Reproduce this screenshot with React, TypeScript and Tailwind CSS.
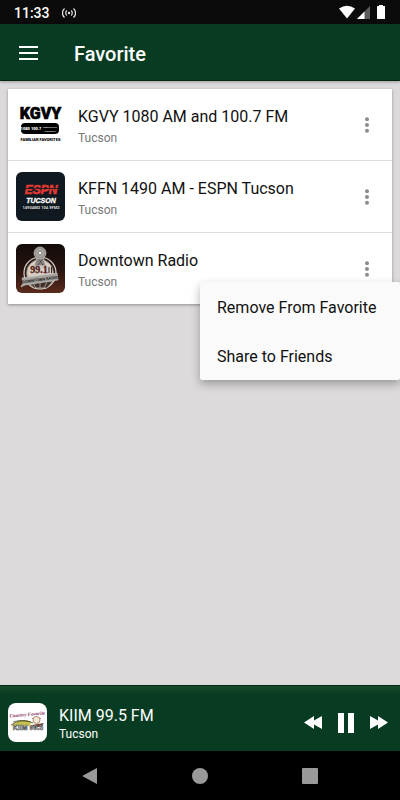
import { useState } from "react";

interface Station {
  id: string;
  name: string;
  city: string;
  logo: React.ReactNode;
}

const KgvyLogo = () => (
  <svg viewBox="0 0 49 49" className="size-full bg-white" aria-hidden="true">
    <g fontFamily="Roboto, sans-serif" fontWeight="900" textAnchor="middle">
      <text x="24.5" y="19" fontSize="16" stroke="#000" strokeWidth="0.6">
        KGVY
      </text>
      <rect x="5" y="23" width="38" height="11" rx="4" />
      <text x="15" y="30" fontSize="4" fill="#fff">
        1080 100.7
      </text>
      <text x="34" y="28" fontSize="2" fill="#ddd">
        GREEN VALLEY
      </text>
      <text x="34" y="32" fontSize="2" fill="#ddd">
        SAHUARITA
      </text>
      <text x="24.5" y="41" fontSize="4">
        FAMILIAR FAVORITES
      </text>
    </g>
  </svg>
);

const EspnLogo = () => (
  <svg viewBox="0 0 49 49" className="size-full bg-[#101820]" aria-hidden="true">
    <g fontFamily="'Liberation Sans', sans-serif" fontWeight="700" textAnchor="middle">
      <text
        x="25"
        y="22"
        fontSize="12"
        fontStyle="italic"
        fill="#e03a34"
        stroke="#e03a34"
        strokeWidth="0.6"
      >
        ESPN
      </text>
      <path d="M8 16.500h34" stroke="#101820" strokeWidth="0.8" />
      <text x="25" y="31" fontSize="7" fontStyle="italic" fill="#fff" stroke="#fff" strokeWidth="0.3">
        TUCSON
      </text>
      <text x="25" y="37" fontSize="4" fontFamily="Roboto, sans-serif" fill="#ddd">
        1490AM2 104.9FM2
      </text>
    </g>
  </svg>
);

const DowntownLogo = () => (
  <svg viewBox="0 0 49 49" className="size-full" aria-hidden="true">
    <defs>
      <linearGradient id="dusk" x1="0" y1="0" x2="0" y2="1">
        <stop offset="0" stopColor="#120b0a" />
        <stop offset="0.5" stopColor="#25130f" />
        <stop offset="1" stopColor="#5a2b1c" />
      </linearGradient>
    </defs>
    <rect width="49" height="49" fill="url(#dusk)" />
    <circle cx="24" cy="29" r="16" fill="#2b1d19" stroke="#d8d2c8" strokeWidth="1.2" />
    <circle cx="24" cy="29" r="13.5" fill="#d6cec2" stroke="#776e66" strokeWidth="0.8" />
    <path d="M21 13l-3 9h12l-3-9z" fill="#8c8883" stroke="#d8d4ce" strokeWidth="0.7" />
    <path d="M22 14l5 7M27 14l-5 7" stroke="#3c3735" strokeWidth="0.7" />
    <circle cx="24" cy="9" r="6" fill="#96928e" stroke="#c9c5c0" strokeWidth="0.7" />
    <circle cx="24" cy="9" r="3.5" fill="none" stroke="#c9c5c0" strokeWidth="0.6" />
    <circle cx="24" cy="9" r="1.3" fill="#eee" />
    <path d="M12 37l6 7h13l6-7z" fill="#40312c" stroke="#c9c1b7" strokeWidth="0.7" />
    <path d="M17 39l3 5M24 38v6M31 38l-3 6" stroke="#c9c1b7" strokeWidth="0.7" />
    <text
      x="23"
      y="29"
      fontSize="10"
      fontWeight="700"
      textAnchor="middle"
      fontFamily="'Liberation Serif', serif"
      fill="#541c1c"
      stroke="#541c1c"
      strokeWidth="0.3"
    >
      99.1
    </text>
    <path d="M33 23v6M35.500 23v6" stroke="#38211d" strokeWidth="1" />
    <path d="M6 34l35-5 1 7-33 5-4 2 2-4z" fill="#a5a29e" stroke="#cfcac4" strokeWidth="0.6" />
    <text
      x="24"
      y="37"
      fontSize="4"
      fontWeight="700"
      textAnchor="middle"
      fontFamily="Roboto, sans-serif"
      fill="#211d1c"
      transform="rotate(-8 24 36)"
    >
      DOWNTOWN RADIO
    </text>
  </svg>
);

const KiimLogo = () => (
  <svg viewBox="0 0 39 39" className="size-full bg-white" aria-hidden="true">
    <path d="M3 23c5-6 15-7 21-4l-3 4H3z" fill="#c9c14e" />
    <path d="M3 22c7-5 16-5 22-2M5 19c6-2 12-2 17 0" fill="none" stroke="#4e5033" strokeWidth="0.8" />
    <path d="M24 22l12-2-3 4h-8z" fill="#713d32" />
    <circle cx="28.500" cy="17" r="3.500" fill="#f5ead8" stroke="#a97a5d" strokeWidth="0.9" />
    <path d="M24 15l1 1M33 15l-1 1" stroke="#a97a5d" strokeWidth="0.8" />
    <text
      x="19.5"
      y="13"
      fontSize="5"
      fontStyle="italic"
      fontWeight="700"
      textAnchor="middle"
      fontFamily="'Liberation Serif', serif"
      fill="#842f60"
      transform="rotate(-5 20 13)"
    >
      Country Favorite
    </text>
    <text
      x="20"
      y="27"
      fontSize="7"
      fontWeight="700"
      textAnchor="middle"
      fontFamily="'Liberation Sans', sans-serif"
      fill="#fff"
      stroke="#555"
      strokeWidth="0.6"
    >
      KIIM 99.5
    </text>
  </svg>
);

const stations: Station[] = [
  { id: "kgvy", name: "KGVY 1080 AM and 100.7 FM", city: "Tucson", logo: <KgvyLogo /> },
  { id: "kffn", name: "KFFN 1490 AM - ESPN Tucson", city: "Tucson", logo: <EspnLogo /> },
  { id: "downtown", name: "Downtown Radio", city: "Tucson", logo: <DowntownLogo /> },
];

const menuItems = ["Remove From Favorite", "Share to Friends"];

const StatusBar = () => (
  <div className="flex h-6 items-center justify-between bg-[#0b0b0b] px-[14px] text-white">
    <div className="flex items-center gap-3 pt-0.5">
      <span className="text-sm font-medium">11:33</span>
      <svg width="14" height="12" viewBox="0 0 14 12" fill="none" stroke="#e5e5e5" aria-hidden="true">
        <circle cx="7" cy="6" r="1.2" fill="#e5e5e5" stroke="none" />
        <path
          d="M4.800 3.500a3.500 3.500 0 0 0 0 5M9.200 3.500a3.500 3.500 0 0 1 0 5M2.500 1.500a6 6 0 0 0 0 9M11.500 1.500a6 6 0 0 1 0 9"
          strokeWidth="1.2"
        />
      </svg>
    </div>
    <svg width="48" height="14" viewBox="0 0 48 14" aria-hidden="true">
      <path d="M1 3.500Q9 -2 17 3.500L9 13.500z" fill="#fff" />
      <path d="M32 1v13H19z" fill="#5c5c5c" />
      <path d="M26.500 6.500V14H19z" fill="#fff" />
      <path d="M41 0h4v1h1.500q.5 0 .5.500v12q0 .5-.5.500h-7q-.5 0-.5-.5v-12q0-.5.5-.5H41z" fill="#fff" />
    </svg>
  </div>
);

const App = () => {
  const [openMenu, setOpenMenu] = useState<string | null>("downtown");
  const [isPlaying, setIsPlaying] = useState(true);

  return (
    <div className="flex min-h-screen flex-col overflow-x-hidden bg-[#dddadc] font-[Roboto,sans-serif]">
      <StatusBar />

      <header className="flex h-[57px] items-center border-b border-[#03260f] bg-[#083c22] px-[19px] text-white shadow-[0_1px_3px_rgba(0,0,0,0.3)]">
        <button type="button" aria-label="Open navigation" className="cursor-pointer pt-0.5">
          <svg width="19" height="14" viewBox="0 0 19 14" fill="#fff">
            <path d="M0 0h19v2H0zM0 6h19v2H0zM0 12h19v2H0z" />
          </svg>
        </button>
        <h1 className="ml-9 pt-1 text-xl font-medium">Favorite</h1>
      </header>

      <main className="flex-1 px-2 pt-2">
        <ul className="bg-white shadow-[0_1px_3px_rgba(0,0,0,0.35)]">
          {stations.map((station) => (
            <li
              key={station.id}
              className="relative flex h-[72px] items-center border-b border-[#dedede] pr-4 pl-2 last:h-[71px] last:border-b-0"
            >
              <div className="size-[49px] shrink-0 overflow-hidden rounded-md">{station.logo}</div>
              <div className="ml-[13px] min-w-0 flex-1 pt-0.5">
                <h2 className="truncate text-base leading-6 text-[#111]">{station.name}</h2>
                <p className="text-xs leading-[18px] text-[#777]">{station.city}</p>
              </div>
              <button
                type="button"
                aria-label={`Options for ${station.name}`}
                onClick={() => setOpenMenu(openMenu === station.id ? null : station.id)}
                className="flex h-6 w-[18px] cursor-pointer items-center justify-center"
              >
                <svg width="4" height="16" viewBox="0 0 4 16" fill="#8c8c8c">
                  <circle cx="2" cy="2.300" r="2" />
                  <circle cx="2" cy="8" r="2" />
                  <circle cx="2" cy="13.700" r="2" />
                </svg>
              </button>

              {openMenu === station.id && (
                <div
                  role="menu"
                  className="absolute top-[49px] -right-2 z-10 w-[200px] rounded-xs bg-[#fafafa] shadow-[0_4px_10px_rgba(0,0,0,0.3)]"
                >
                  {menuItems.map((item) => (
                    <button
                      key={item}
                      type="button"
                      role="menuitem"
                      onClick={() => setOpenMenu(null)}
                      className="block h-[49px] w-full cursor-pointer px-[17px] pt-0.5 text-left text-base whitespace-nowrap text-[#111]"
                    >
                      {item}
                    </button>
                  ))}
                </div>
              )}
            </li>
          ))}
        </ul>
      </main>

      <section
        aria-label="Now playing"
        className="flex h-[66px] items-center border-t border-[#03260f] bg-[#083c22] bg-linear-to-b from-[#194a2c] to-[#083c22] to-[8px] pr-3 pl-2 text-white"
      >
        <div className="mt-2 size-[39px] shrink-0 overflow-hidden rounded-lg">
          <KiimLogo />
        </div>
        <div className="mt-2.5 ml-3 min-w-0 flex-1">
          <h2 className="truncate text-base leading-5">KIIM 99.5 FM</h2>
          <p className="text-xs leading-4">Tucson</p>
        </div>
        <div className="mt-2 flex items-center gap-4">
          <button type="button" aria-label="Previous station" className="cursor-pointer">
            <svg width="18" height="13" viewBox="0 0 18 13" fill="#fff">
              <path d="M0 6.500L10 0v4.500L18 0v13l-8-4.500V13z" />
            </svg>
          </button>
          <button
            type="button"
            aria-label={isPlaying ? "Pause" : "Play"}
            onClick={() => setIsPlaying(!isPlaying)}
            className="cursor-pointer"
          >
            <svg width="16" height="20" viewBox="0 0 16 20" fill="#fff">
              {isPlaying ? <path d="M0 0h6v20H0zM10 0h6v20h-6z" /> : <path d="M0 0l16 10L0 20z" />}
            </svg>
          </button>
          <button type="button" aria-label="Next station" className="cursor-pointer">
            <svg width="18" height="13" viewBox="0 0 18 13" fill="#fff">
              <path d="M18 6.500L8 0v4.500L0 0v13l8-4.500V13z" />
            </svg>
          </button>
        </div>
      </section>

      <nav aria-label="System" className="flex h-[49px] items-center justify-center gap-[94px] bg-black">
        <button type="button" aria-label="Back" className="cursor-pointer">
          <svg width="16" height="16" viewBox="0 0 16 16" fill="#999">
            <path d="M15 0v16L1 8.500q-1-.5 0-1z" />
          </svg>
        </button>
        <button type="button" aria-label="Home" className="size-4 cursor-pointer rounded-full bg-[#999]" />
        <button type="button" aria-label="Recent apps" className="size-4 cursor-pointer rounded-[1px] bg-[#999]" />
      </nav>
    </div>
  );
};

export default App;
